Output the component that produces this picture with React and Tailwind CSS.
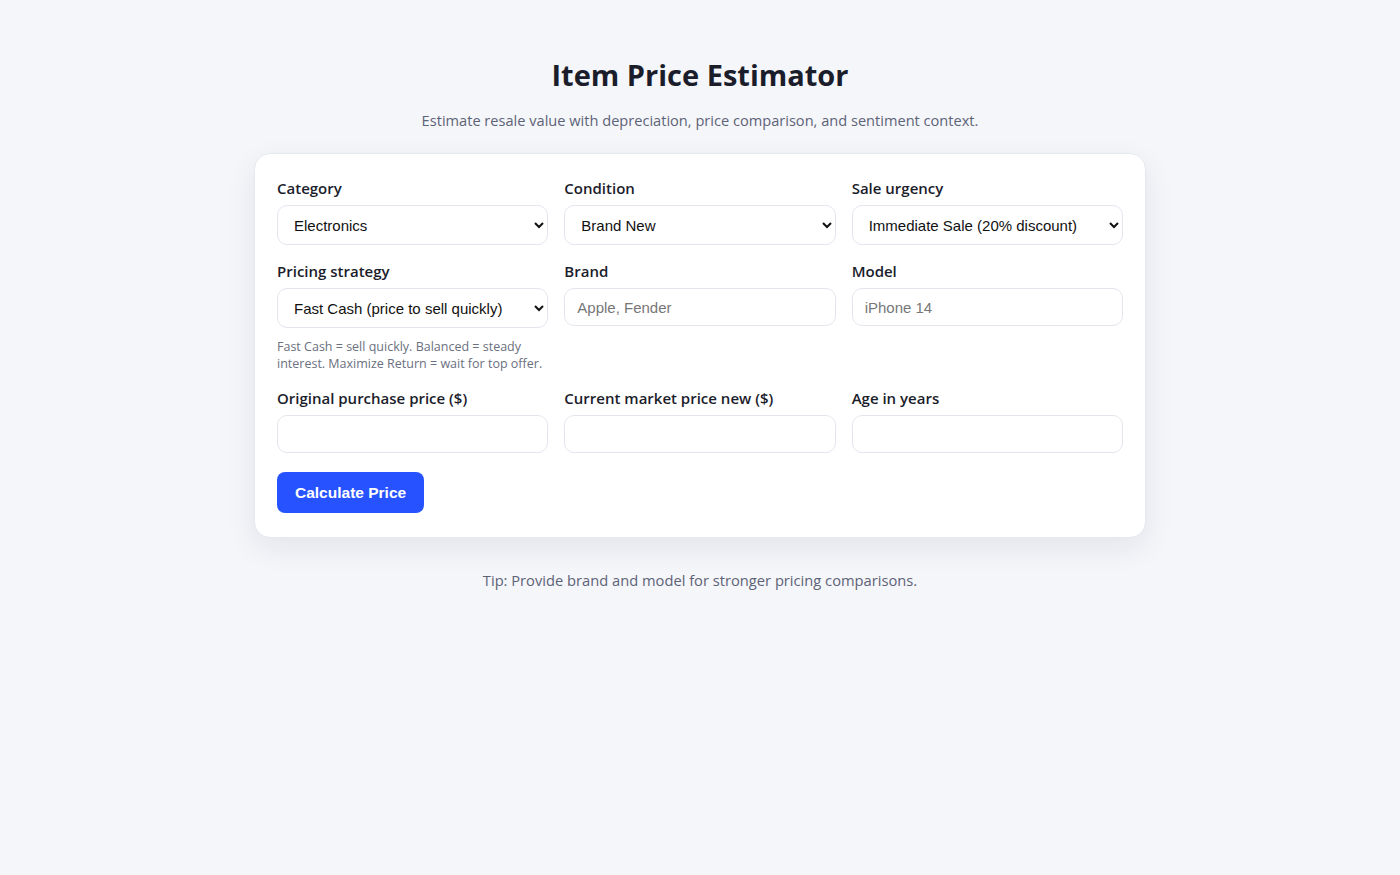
import React, { useState } from 'react';

const fieldCls =
  'w-full rounded-[10px] border border-[#e3e6ee] bg-white px-3 text-[15px] text-[#111] font-["Liberation_Sans",Arial,sans-serif] outline-none';

function Field({ label, children, hint }) {
  return (
    <div className="flex flex-col">
      <label className="mb-1.5 text-[15px] leading-[22px] font-semibold text-[#1b1d2b]">{label}</label>
      {children}
      {hint && (
        <p className="mt-2.5 text-[12.5px] leading-[17px] text-[#6b7080]">{hint}</p>
      )}
    </div>
  );
}

export default function App() {
  const [form, setForm] = useState({
    category: 'Electronics',
    condition: 'Brand New',
    urgency: 'Immediate Sale (20% discount)',
    strategy: 'Fast Cash (price to sell quickly)',
    brand: '',
    model: '',
    original: '',
    market: '',
    age: '',
  });

  const set = (k) => (e) => setForm((f) => ({ ...f, [k]: e.target.value }));

  return (
    <div className='min-h-screen bg-[#f5f6fa] font-["Open_Sans","Noto_Sans",sans-serif] pt-[54px]'>
      <h1 className="text-center text-[29px] leading-[42px] font-bold text-[#1b1d2b]">Item Price Estimator</h1>
      <p className="mt-[13px] text-center text-[14.6px] leading-[22px] text-[#5d6377]">
        Estimate resale value with depreciation, price comparison, and sentiment context.
      </p>

      <div className="mx-auto mt-[22px] w-[892px] rounded-2xl border border-[#e6e8ef] bg-white px-[22px] pt-[23px] pb-6 shadow-[0_10px_30px_rgba(20,30,60,0.08)]">
        <div className="grid grid-cols-3 gap-x-4 gap-y-[15px]">
          <Field label="Category">
            <select className={fieldCls + ' h-10'} value={form.category} onChange={set('category')}>
              <option>Electronics</option>
              <option>Furniture</option>
              <option>Clothing</option>
              <option>Musical Instruments</option>
            </select>
          </Field>
          <Field label="Condition">
            <select className={fieldCls + ' h-10'} value={form.condition} onChange={set('condition')}>
              <option>Brand New</option>
              <option>Like New</option>
              <option>Good</option>
              <option>Fair</option>
            </select>
          </Field>
          <Field label="Sale urgency">
            <select className={fieldCls + ' h-10'} value={form.urgency} onChange={set('urgency')}>
              <option>Immediate Sale (20% discount)</option>
              <option>Normal</option>
              <option>No Rush</option>
            </select>
          </Field>

          <Field
            label="Pricing strategy"
            hint="Fast Cash = sell quickly. Balanced = steady interest. Maximize Return = wait for top offer."
          >
            <select className={fieldCls + ' h-10'} value={form.strategy} onChange={set('strategy')}>
              <option>Fast Cash (price to sell quickly)</option>
              <option>Balanced</option>
              <option>Maximize Return</option>
            </select>
          </Field>
          <Field label="Brand">
            <input
              className={fieldCls + ' h-[38px] placeholder:text-[#777]'}
              placeholder="Apple, Fender"
              value={form.brand}
              onChange={set('brand')}
            />
          </Field>
          <Field label="Model">
            <input
              className={fieldCls + ' h-[38px] placeholder:text-[#777]'}
              placeholder="iPhone 14"
              value={form.model}
              onChange={set('model')}
            />
          </Field>

          <Field label="Original purchase price ($)">
            <input className={fieldCls + ' h-[38px]'} value={form.original} onChange={set('original')} />
          </Field>
          <Field label="Current market price new ($)">
            <input className={fieldCls + ' h-[38px]'} value={form.market} onChange={set('market')} />
          </Field>
          <Field label="Age in years">
            <input className={fieldCls + ' h-[38px]'} value={form.age} onChange={set('age')} />
          </Field>
        </div>

        <button className='mt-[19px] h-[41px] rounded-lg bg-[#2653ff] px-[18px] text-[15.5px] font-bold text-white font-["Liberation_Sans",Arial,sans-serif]'>
          Calculate Price
        </button>
      </div>

      <p className="mt-[31px] text-center text-[14.7px] leading-[22px] text-[#5d6377]">
        Tip: Provide brand and model for stronger pricing comparisons.
      </p>
    </div>
  );
}
